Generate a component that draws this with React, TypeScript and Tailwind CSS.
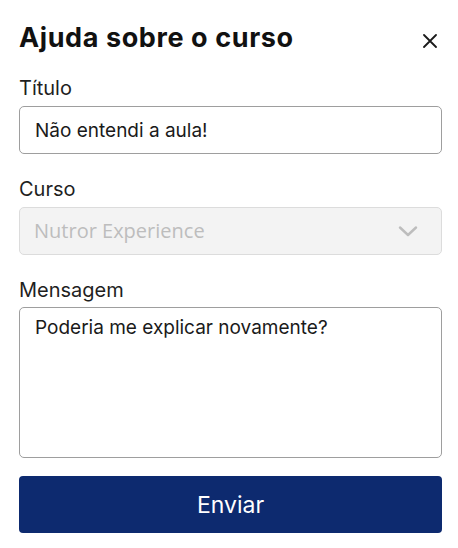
import React from "react";

export default function App() {
  const font = { fontFamily: "Inter, 'Noto Sans', sans-serif" };
  return (
    <div className="w-[458px] h-[548px] bg-white pl-[19px] pr-[16px] pt-[22px] text-[#1c1c1c]" style={font}>
      <div className="flex items-start justify-between">
        <h1 className="text-[27px] leading-[32px] font-bold text-[#111] tracking-[0.6px]">Ajuda sobre o curso</h1>
        <button className="mt-[12px] mr-[5px]" aria-label="Fechar">
          <svg width="14" height="14" viewBox="0 0 14 14" fill="none">
            <path d="M1 1L13 13M13 1L1 13" stroke="#1a1a1a" strokeWidth="1.8" strokeLinecap="round" />
          </svg>
        </button>
      </div>

      <label className="block mt-[22px] text-[20px] leading-[24px] text-[#1f1f1f]">Título</label>
      <div className="mt-[6px] h-[48px] border border-[#9e9e9e] rounded-[5px] flex items-center pl-[15px] pt-[2px] text-[19px] leading-[24px] text-[#1a1a1a]">
        Não entendi a aula!
      </div>

      <label className="block mt-[23px] text-[20px] leading-[24px] text-[#1f1f1f]">Curso</label>
      <div className="mt-[6px] h-[48px] border border-[#dcdcdc] bg-[#f3f3f3] rounded-[5px] flex items-center justify-between pl-[14px] pr-[23px]">
        <span className="text-[20px] leading-[24px] text-[#bdbdbd]" style={{ fontFamily: "'Open Sans', sans-serif" }}>
          Nutror Experience
        </span>
        <svg width="20" height="11" viewBox="0 0 20 11" fill="none">
          <path d="M2 1.5L10 9L18 1.5" stroke="#bdbdbd" strokeWidth="2.4" strokeLinecap="round" strokeLinejoin="round" />
        </svg>
      </div>

      <label className="block mt-[23px] text-[20px] leading-[24px] text-[#1f1f1f]">Mensagem</label>
      <div className="mt-[5px] h-[151px] border border-[#9e9e9e] rounded-[5px] pl-[15px] pt-[8px] text-[19px] leading-[24px] text-[#1a1a1a]">
        Poderia me explicar novamente?
      </div>

      <button className="mt-[18px] w-full h-[57px] bg-[#0d2a6f] rounded-[4px] text-white text-[23px] leading-[28px] flex items-center justify-center">
        Enviar
      </button>
    </div>
  );
}
